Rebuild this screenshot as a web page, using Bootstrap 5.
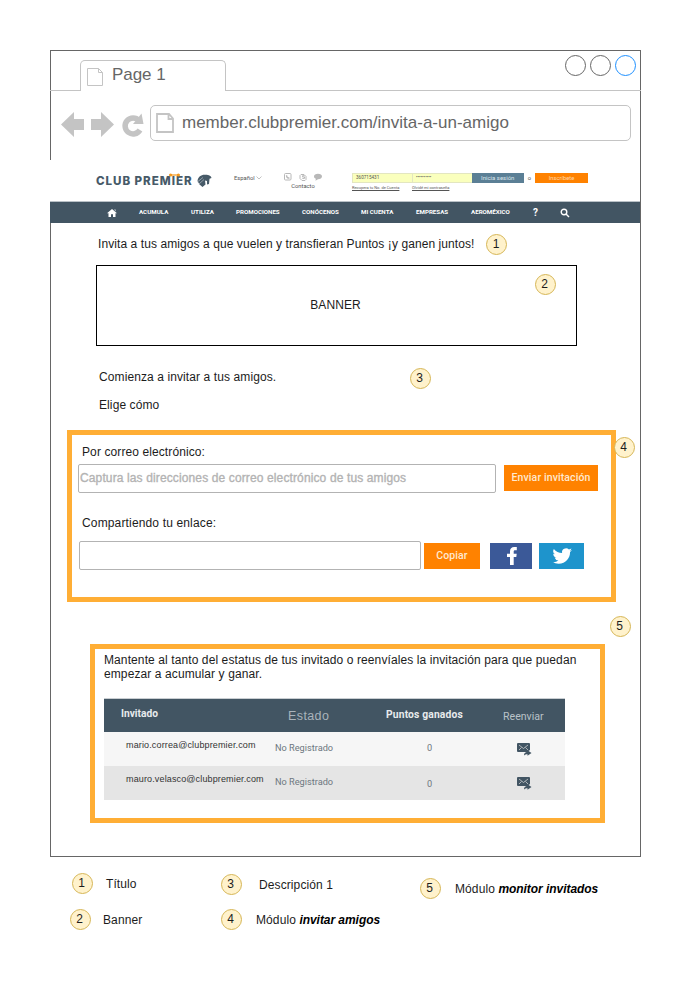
<!DOCTYPE html>
<html lang="es">
<head>
<meta charset="utf-8">
<meta name="viewport" content="width=device-width, initial-scale=1">
<title>Invita a un amigo</title>
<link href="https://cdn.jsdelivr.net/npm/bootstrap@5.3.0/dist/css/bootstrap.min.css" rel="stylesheet">
<style>
body{font:12px/14px "Liberation Sans",Arial,sans-serif;color:#1c1c1c;letter-spacing:.1px;background:#fff}
.frame{width:591px;height:807px;margin:50px 0 0 50px;border:1px solid #666}
.tabs{height:40px;margin:0 -1px}
.tabs .edge{border-bottom:1px solid #c4c4c4;height:40px}
.tabs .lead-in{width:30px}
.tab-item{width:146px;height:31px;border:1px solid #c4c4c4;border-bottom:0;border-radius:5px 5px 0 0;padding:0 0 2px 6px;color:#666;font-size:17px;letter-spacing:-.05px}
.tab-item svg{margin:4px 8px 0 0}
.wins{padding-right:5px}
.win{width:21px;height:21px;border:1px solid #666;border-radius:50%}
.win-blue{border-color:#1e90ff}
.address{height:69px;padding:14px 9px 0 10px}
.url{width:481px;height:36px;border:1px solid #c4c4c4;border-radius:5px;padding-left:5px;color:#666;font-size:17px;letter-spacing:0}
.site{margin-left:-1px;height:63px;background:#fff;font-family:Roboto,sans-serif;position:relative}
.site-top{height:41px;padding:13px 0 0 46px;font-size:5.8px;line-height:10px;letter-spacing:0;color:#555}
.brand-name{font:800 11.6px/16px Inter,sans-serif;color:#475a68;letter-spacing:.95px;width:101px}
.brand-name i{font-style:normal;position:relative}
.brand-name svg{position:absolute;left:-3px;top:-1px}
.lang{width:50px;margin-left:22px}
.contact{width:38px}
.login{margin-left:30px;width:236px}
.field{height:10px;background:#faffbd;border:1px solid #e3e6c0;border-width:1px 0 1px 1px;line-height:8px;padding-left:3px;font-size:4.6px;color:#555}
.field-w{width:61px}
.b-login{width:53px;height:10px;background:#5b7f95;color:#dce6ec;text-align:center;font-size:6px}
.b-join{width:53px;height:10px;background:#ff8200;color:#ffd6a8;text-align:center}
.sub{font-size:4px;line-height:8px;text-decoration:underline;margin-top:1px}
.sub span:first-child{width:60px}
.main-nav{height:22px;background:#425563;border-top:1px solid #b9c1c7;color:#fff;font-size:6.2px;font-weight:700;line-height:21px;letter-spacing:0;display:grid;grid-template-columns:32px 52px 45px 66px 59px 55px 55px 62px 27px 12px;padding-left:57px;align-items:center}
.fs-q{font-size:10px}
.num{width:21px;height:21px;border:1px solid #d6b656;background:#fff2cc;border-radius:50%;padding:0 2px 1px 0;letter-spacing:0;flex:none}
.title-row{height:42px;padding-left:47px}
.title-row .num{margin-left:12px;padding-right:1px}
.t-title{width:376px;white-space:nowrap;letter-spacing:.08px}
.banner{width:481px;height:81px;margin-left:45px;border:1px solid #000;position:relative;padding:0 2px 1px 0}
.banner .num{position:absolute;left:438px;top:8px}
.intro{padding:22px 0 0 48px;height:84px}
.intro-t{width:311px;padding-top:2px}
.choose{margin-top:9px}
.module{border:5px solid #ffae35;position:relative}
.m-invite{width:549px;height:172px;margin-left:16px;padding:9px 0 0 6px}
.m-invite>.num{position:absolute;left:542px;top:2px}
.lbl{padding:1px 0 0 4px;margin-bottom:5px}
.lbl2{margin:22px 0 11px;letter-spacing:.15px}
.box{height:29px;border:1px solid #b3b3b3;border-radius:2px;background:#fff}
.box-mail{width:418px;color:#b3b3b3;-webkit-text-stroke:.35px #b3b3b3;padding:0 0 2px 1px;letter-spacing:.125px}
.box-link{width:342px;margin-left:1px}
.act{background:#ff8200;color:#ffe9d1;font:500 10.5px/26px Roboto,sans-serif;height:26px;text-align:center;letter-spacing:.1px}
.w-send{width:94px;margin:1px 0 0 8px;line-height:25px}
.w-copy{width:56px;margin:2px 0 0 3px}
.soc{height:26px;margin-top:1.5px}
.fb{width:42px;margin-left:10px;background:#3b5998}
.tw{width:45px;margin-left:7px;background:#1e94cc}
.five{margin:14px 0 7px 559px}
.m-status{width:515px;height:179px;margin-left:39px;padding:4px 0 0 9px}
.guests{width:461px;margin-top:17px}
.g-row{display:grid;grid-template-columns:160px 110px 110px 81px;height:34px;font:9.2px/14px Roboto,sans-serif;color:#6d7780;letter-spacing:0}
.g-head{background:#425563;border-top:1px solid #c9ced2}
.g-a{background:#f6f6f6}.g-b{background:#e5e5e5}
.mail{font:9px/12px "Liberation Sans",Arial,sans-serif;color:#333;padding:7px 0 0 22px;letter-spacing:.14px}
.h-inv{padding:8px 0 0 17px;color:#e8ebed;font-weight:700;font-size:10.2px}
.h-est{color:#a9b3bb;font:12.5px/14px "Liberation Sans",Arial,sans-serif;padding:10px 0 0 24px;letter-spacing:.4px}
.h-pts{padding:9px 0 0 12px;color:#e8ebed;font-weight:700;font-size:10.3px;letter-spacing:.15px}
.h-ree{padding:11px 0 0 19px;color:#b9c2c8;font-size:10.6px}
.st{padding:9px 0 0 11px}.pt{padding:9px 0 0 53px}.re{padding:10px 0 0 33px}
.g-b .pt{padding-top:11px}
.legend{width:560px;margin:16px 0 0 70px}
.legend b{color:#000;letter-spacing:-.05px}
.lg-a{width:151px}.lg-b{width:199px}
.lg-1{margin-left:2px}.lg-2{margin-top:15px}
.lg-1 .num{margin-right:13px}.lg-2 .num{margin-right:12px}
.lg-3{margin-top:1px}.lg-4{margin-top:14px}
.lg-3 .num{margin-right:17px}.lg-4 .num,.lg-5 .num{margin-right:14px}
.lg-5{height:21px;margin-top:5px}
</style>
<script src="https://cdn.jsdelivr.net/npm/bootstrap@5.3.0/dist/js/bootstrap.bundle.min.js"></script>
</head>
<body>
<main class="frame">
  <div class="tabs d-flex align-items-end">
    <div class="edge lead-in"></div>
    <div class="tab-item d-flex align-items-center">
      <svg width="17" height="20" fill="#fff" stroke="#c4c4c4"><path d="M.5 1.500h11l4 4v13H.5zM11.500 1.500v4h4"/></svg><span>Page 1</span>
    </div>
    <div class="edge flex-grow-1 d-flex justify-content-end">
      <div class="wins d-flex gap-1 pt-1"><span class="win"></span><span class="win"></span><span class="win win-blue"></span></div>
    </div>
  </div>
  <div class="address d-flex">
    <svg width="89" height="36" fill="#c4c4c4"><path d="M0 19.500 13 7v7h10v11H13v7zM53 19.500 40 7v7H30v11h10v7z"/><path d="M78 15.500A8 8 0 1 0 79 25" fill="none" stroke="#c4c4c4" stroke-width="5.500"/><path d="M80.500 8.500 82.500 19H72z"/></svg>
    <div class="url d-flex align-items-center"><svg class="me-2" width="18" height="22" fill="#fff" stroke="#c4c4c4" stroke-width="1.800"><path d="M1 2h12l4 4.500V20H1zM12.500 2v5H17"/></svg><span>member.clubpremier.com/invita-a-un-amigo</span></div>
  </div>

  <header class="site">
    <div class="site-top d-flex">
      <div class="brand-name text-nowrap">CLUB PREM<i>I<svg width="11" height="4" fill="#f59a1d"><circle cx="1.600" cy="2" r="1.600"/><circle cx="9.400" cy="2" r="1.600"/><path d="M1 1.400h9v1.200H1z"/></svg></i>ER</div>
      <svg width="15" height="15"><path fill="#475a68" d="M.5 8C1 4 4 1.800 7.500 1.800c3 0 6.500.5 7 3.200l-2 .8-.5 5.200-2 .5V8L8 7.500l.5 4L5.500 14 2.500 11.500z"/><path d="M.5 8.800 6 4.500M2 11l5-4.500" stroke="#b5bfc7" stroke-width=".7"/></svg>
      <div class="lang">Español <svg width="6" height="4" fill="none" stroke="#999" stroke-width=".6"><path d="M.5.5 3 3 5.500.5"/></svg></div>
      <div class="contact"><svg class="d-block" width="39" height="8" fill="none" stroke="#b8b8b8"><rect x=".5" y=".5" width="6.500" height="6.500" rx="1"/><path d="M2.500 2.200c0 2 1 3 3 3" stroke-width="1.300"/><path d="M17 1.500h3l2 2v3l-1 1h-3l-2-2v-3zM20.500 2.700h-2v1.200h2v1.500h-2.200"/><path fill="#b8b8b8" stroke="none" d="M34 .8c2.300 0 4 1.100 4 2.700s-1.700 2.700-4 2.700L31.500 7.800l.3-2C30.500 5.200 30 4.500 30 3.500 30 1.900 31.700.8 34 .8z"/></svg><div class="text-center">Contacto</div></div>
      <div class="login"><div class="d-flex"><div class="field field-w">360715431</div><div class="field field-w">••••••••••</div><div class="b-login">Inicia sesión</div><div class="px-1">o</div><div class="b-join flex-shrink-0">Inscríbete</div></div>
        <div class="sub d-flex"><span>Recupera tu No. de Cuenta</span><span>Olvidé mi contraseña</span></div></div>
    </div>
    <nav class="main-nav text-nowrap">
      <svg width="10" height="8" fill="#fff"><path d="M5 0 10 4.200H8.500V8H6V5.300H4V8H1.500V4.200H0zM7.300.5h1.200v2z"/></svg>
      <span>ACUMULA</span><span>UTILIZA</span><span>PROMOCIONES</span><span>CONÓCENOS</span><span>MI CUENTA</span><span>EMPRESAS</span><span>AEROMÉXICO</span><span class="fs-q">?</span>
      <svg width="10" height="10" fill="none" stroke="#fff" stroke-width="1.400"><circle cx="4" cy="4" r="2.800"/><path d="m6 6 3 3"/></svg>
    </nav>
  </header>

  <div class="title-row d-flex align-items-center"><span class="t-title">Invita a tus amigos a que vuelen y transfieran Puntos ¡y ganen juntos!</span><span class="num d-flex align-items-center justify-content-center">1</span></div>
  <section class="banner d-flex align-items-center justify-content-center"><span>BANNER</span><span class="num d-flex align-items-center justify-content-center">2</span></section>
  <section class="intro">
    <div class="d-flex"><div class="intro-t">Comienza a invitar a tus amigos.</div><span class="num d-flex align-items-center justify-content-center">3</span></div>
    <div class="choose">Elige cómo</div>
  </section>

  <section class="module m-invite">
    <span class="num d-flex align-items-center justify-content-center">4</span>
    <div class="lbl">Por correo electrónico:</div>
    <div class="d-flex"><div class="box box-mail d-flex align-items-center">Captura las direcciones de correo electrónico de tus amigos</div><div class="act w-send">Enviar invitación</div></div>
    <div class="lbl lbl2">Compartiendo tu enlace:</div>
    <div class="d-flex"><div class="box box-link"></div><div class="act w-copy">Copiar</div>
      <svg class="soc fb" viewBox="0 0 42 26"><path fill="#fff" d="M20 22v-8h-3v-3.300h3V8.500C20 5.500 21.500 4 24.300 4h2.500v3.200h-1.700c-1.100 0-1.400.5-1.400 1.500v2h3l-.4 3.300h-2.600v8z"/></svg>
      <svg class="soc tw" viewBox="0 0 45 26"><path fill="#fff" transform="translate(13.500 4.500) scale(1.220 1.200)" d="M5.030 13.600c6.040 0 9.340-5 9.340-9.340v-.42A6.700 6.700 0 0 0 16 2.140a6.600 6.600 0 0 1-1.890.52A3.300 3.300 0 0 0 15.560.84a6.600 6.600 0 0 1-2.090.8 3.290 3.290 0 0 0-5.590 3A9.300 9.300 0 0 1 1.110 1.200a3.290 3.290 0 0 0 1.020 4.380A3.300 3.300 0 0 1 .64 5.200v.04a3.290 3.290 0 0 0 2.630 3.220 3.200 3.200 0 0 1-.86.120q-.31 0-.61-.06a3.280 3.280 0 0 0 3.060 2.280A6.600 6.600 0 0 1 0 12.160a9.300 9.300 0 0 0 5.030 1.440"/></svg>
    </div>
  </section>

  <div class="num five d-flex align-items-center justify-content-center">5</div>

  <section class="module m-status">
    <div class="text-nowrap">Mantente al tanto del estatus de tus invitado o reenvíales la invitación para que puedan<br>empezar a acumular y ganar.</div>
    <div class="guests">
      <div class="g-row g-head"><span class="h-inv">Invitado</span><span class="h-est">Estado</span><span class="h-pts">Puntos ganados</span><span class="h-ree">Reenviar</span></div>
      <div class="g-row g-a"><span class="mail">mario.correa@clubpremier.com</span><span class="st">No Registrado</span><span class="pt">0</span><span class="re"><svg width="15" height="13"><path fill="#425563" d="M1 0h11q1 0 1 1v6l-3 2H1Q0 9 0 8V1q0-1 1-1zM7 12.500c0-2 1-3.500 3.500-3.700V7.200L14.500 10l-4 2.700v-1.500C9 11.200 8 11.600 7 12.500z"/><path d="M2 2l4.500 3.500L11 2M2 7l2.500-2.500M11 7 8.500 4.500" fill="none" stroke="#ddd" stroke-width=".7"/></svg></span></div>
      <div class="g-row g-b"><span class="mail">mauro.velasco@clubpremier.com</span><span class="st">No Registrado</span><span class="pt">0</span><span class="re"><svg width="15" height="13"><path fill="#425563" d="M1 0h11q1 0 1 1v6l-3 2H1Q0 9 0 8V1q0-1 1-1zM7 12.500c0-2 1-3.500 3.500-3.700V7.200L14.500 10l-4 2.700v-1.500C9 11.200 8 11.600 7 12.500z"/><path d="M2 2l4.500 3.500L11 2M2 7l2.500-2.500M11 7 8.500 4.500" fill="none" stroke="#ddd" stroke-width=".7"/></svg></span></div>
    </div>
  </section>
</main>

<footer class="legend d-flex text-nowrap">
  <div class="lg-a"><div class="d-flex align-items-center lg-1"><span class="num d-flex align-items-center justify-content-center">1</span><span>Título</span></div>
    <div class="d-flex align-items-center lg-2"><span class="num d-flex align-items-center justify-content-center">2</span><span>Banner</span></div></div>
  <div class="lg-b"><div class="d-flex align-items-center lg-3"><span class="num d-flex align-items-center justify-content-center">3</span><span>Descripción 1</span></div>
    <div class="d-flex align-items-center lg-4"><span class="num d-flex align-items-center justify-content-center">4</span><span>Módulo <b><i>invitar amigos</i></b></span></div></div>
  <div class="d-flex align-items-center lg-5"><span class="num d-flex align-items-center justify-content-center">5</span><span>Módulo <b><i>monitor invitados</i></b></span></div>
</footer>
</body>
</html>
